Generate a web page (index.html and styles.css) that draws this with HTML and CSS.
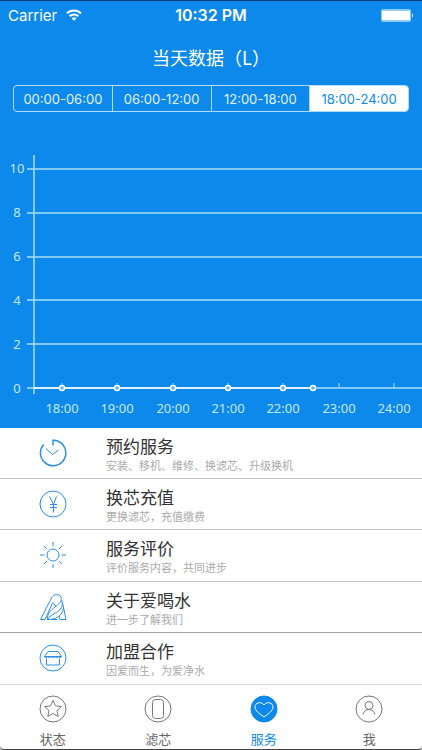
FILE: index.html
```html
<!DOCTYPE html>
<html lang="zh-CN">
  <head>
    <meta charset="UTF-8" />
    <meta name="viewport" content="width=device-width, initial-scale=1.0" />
    <title>服务</title>
    <link rel="stylesheet" href="styles.css">
  </head>
  <body>
    <header class="panel">
      <div class="status-bar">
        <div class="carrier">
          <span>Carrier</span>
          <svg width="16" height="12" viewBox="0 0 16 12" fill="none" stroke="#fff" stroke-width="2">
            <path d="M1 4.4a10 10 0 0 1 14 0M3.6 7.2a6.3 6.3 0 0 1 8.8 0" />
            <path d="M8 11.8L5.6 9.4a3.4 3.4 0 0 1 4.8 0z" fill="#fff" stroke="none" />
          </svg>
        </div>
        <span class="clock">10:32 PM</span>
        <div class="battery">
          <svg width="33" height="13" viewBox="0 0 33 13">
            <rect width="30" height="13" rx="2" fill="#8dcbf8" />
            <rect x="1" y="2" width="28" height="9" fill="#fff" />
            <path d="M31 4q2 2.5 0 5z" fill="#fff" />
          </svg>
        </div>
      </div>

      <h1>当天数据（L）</h1>

      <div class="segments">
        <button type="button" class="segment">00:00-06:00</button>
        <button type="button" class="segment">06:00-12:00</button>
        <button type="button" class="segment">12:00-18:00</button>
        <button type="button" class="segment active">18:00-24:00</button>
      </div>

      <svg class="chart" viewBox="0 0 422 290" role="img" aria-label="当天数据">
        <path class="grid" d="M27 31H422M27 75H422M27 119H422M27 162H422M27 206H422M27 250H422" />
        <path class="axis" d="M34 17V256" />
        <path class="ticks" d="M62 245V250M117 245V250M173 245V250M228 245V250M283 245V250M339 245V250M394 245V250" />
        <g class="y-labels">
          <text x="17" y="35">10</text>
          <text x="17" y="79">8</text>
          <text x="17" y="123">6</text>
          <text x="17" y="167">4</text>
          <text x="17" y="211">2</text>
          <text x="17" y="255">0</text>
        </g>
        <g class="x-labels">
          <text x="62" y="275">18:00</text>
          <text x="117" y="275">19:00</text>
          <text x="173" y="275">20:00</text>
          <text x="228" y="275">21:00</text>
          <text x="283" y="275">22:00</text>
          <text x="339" y="275">23:00</text>
          <text x="394" y="275">24:00</text>
        </g>
        <g class="series">
          <path d="M34 250H313" />
          <circle cx="62" cy="250" r="2.5" />
          <circle cx="117" cy="250" r="2.5" />
          <circle cx="173" cy="250" r="2.5" />
          <circle cx="228" cy="250" r="2.5" />
          <circle cx="283" cy="250" r="2.5" />
          <circle cx="313" cy="250" r="2.5" />
        </g>
      </svg>
    </header>

    <main class="services">
      <a class="service" href="#booking">
        <svg class="icon" viewBox="0 0 28 28">
          <path class="bold" d="M4.7 5.5A12.7 12.7 0 1 0 14 1.3V6.5" />
          <path d="M7 9.5L13.5 15.5 19.5 11" />
        </svg>
        <div>
          <h2>预约服务</h2>
          <p>安装、移机、维修、换滤芯、升级换机</p>
        </div>
      </a>
      <a class="service" href="#recharge">
        <svg class="icon" viewBox="0 0 28 28">
          <circle cx="14" cy="14" r="13" />
          <path d="M10.5 6.5l4 8 3-8M14.5 14.5v8M11 14.5h7M11 17.5h7" />
        </svg>
        <div>
          <h2>换芯充值</h2>
          <p>更换滤芯，充值缴费</p>
        </div>
      </a>
      <a class="service" href="#review">
        <svg class="icon" viewBox="0 0 28 28">
          <circle cx="14" cy="14" r="6" />
          <path d="M14 1v4M14 23v4M1 14h4.5M22.5 14H27M5 5l3 3M20 20l3 3M23 5l-3 3M8 20l-3 3" />
        </svg>
        <div>
          <h2>服务评价</h2>
          <p>评价服务内容，共同进步</p>
        </div>
      </a>
      <a class="service" href="#about">
        <svg class="icon" viewBox="0 0 28 28">
          <path d="M6 26.5H1.5L12.5 5C15 .5 20 .5 22 4c1.5 3.5-1.5 6.500-4.500 8.800C13 16.500 8 19.500 8.500 26.500" />
          <path d="M6 26.5L13.5 10l3.500 3" />
          <path d="M22.5 7c2.500 6-1 10-5 12.500-3.500 2-7.500 3.500-9 7 7 .5 16-3.500 16-12.500" />
          <path d="M23.5 9.5L27 26.5h-6l-1-3.500M12 26.5h6" />
        </svg>
        <div>
          <h2>关于爱喝水</h2>
          <p>进一步了解我们</p>
        </div>
      </a>
      <a class="service" href="#join">
        <svg class="icon" viewBox="0 0 28 28">
          <circle cx="14" cy="14" r="13" />
          <path d="M9 7.5h10l3.5 5H5.5zM7.5 14.5V21h13v-6.500" />
          <path d="M5.5 12.5q1.4 3 2.8 0q1.4 3 2.8 0q1.4 3 2.9 0q1.4 3 2.9 0q1.4 3 2.8 0q1.4 3 2.8 0" />
        </svg>
        <div>
          <h2>加盟合作</h2>
          <p>因爱而生，为爱净水</p>
        </div>
      </a>
    </main>

    <nav class="tab-bar">
      <a class="tab" href="#status">
        <svg class="icon" viewBox="0 0 28 28">
          <circle cx="14" cy="14" r="13" />
          <path d="M14 5.5l2.500 5.400 5.800.7-4.300 4 1.200 5.900-5.200-3-5.200 3 1.200-5.900-4.300-4 5.800-.7z" />
        </svg>
        <span>状态</span>
      </a>
      <a class="tab" href="#filter">
        <svg class="icon" viewBox="0 0 28 28">
          <circle cx="14" cy="14" r="13" />
          <rect x="8.5" y="4.5" width="11" height="19" rx="3" />
        </svg>
        <span>滤芯</span>
      </a>
      <a class="tab active" href="#service">
        <svg class="icon" viewBox="0 0 28 28">
          <circle cx="14" cy="14" r="13" />
          <path class="heart" d="M14 22C10.500 19.500 5 16 5 12c0-4.500 6-6 9-2 3-4 9-2.500 9 2 0 4-5.500 7.500-9 10z" />
        </svg>
        <span>服务</span>
      </a>
      <a class="tab" href="#me">
        <svg class="icon" viewBox="0 0 28 28">
          <circle cx="14" cy="14" r="13" />
          <circle cx="14" cy="10.5" r="4" />
          <path d="M8 19.5c.8-3 3-5 6-5s5.200 2 6 5" />
        </svg>
        <span>我</span>
      </a>
    </nav>
  </body>
</html>
```
FILE: styles.css
```css
* {
  box-sizing: border-box;
}
body {
  margin: 0;
  min-height: 100vh;
  display: flex;
  flex-direction: column;
  font-family: "Noto Sans CJK SC", sans-serif;
  background-color: #bbb;
}
h1,
h2,
p {
  margin: 0;
  font-weight: normal;
}
a {
  color: inherit;
  text-decoration: none;
}
.panel {
  background-color: #0c89ea;
  border-top: 1px solid #0a3c7c;
  color: #fff;
}
.status-bar {
  display: grid;
  grid-template-columns: 1fr auto 1fr;
  align-items: center;
  height: 28px;
  padding: 0 8px;
  font-family: Inter, sans-serif;
  font-size: 15px;
}
.carrier {
  display: flex;
  align-items: center;
  gap: 9px;
}
.clock {
  font-size: 16px;
  font-weight: 600;
}
.battery {
  display: flex;
  justify-content: flex-end;
}
h1 {
  padding: 16px 0;
  font-size: 18px;
  line-height: 24px;
  text-align: center;
}
.segments {
  display: flex;
  height: 27px;
  margin: 0 13px 26px;
  border: 1px solid #b0dcfa;
  border-radius: 4px;
  overflow: hidden;
}
.segment {
  flex: 1;
  padding: 0;
  border: none;
  border-left: 1px solid #b0dcfa;
  background: none;
  color: #e2f3fe;
  font-family: Inter, sans-serif;
  font-size: 13px;
  cursor: pointer;
}
.segment:first-child {
  border-left: none;
}
.segment.active {
  background-color: #fff;
  color: #0c89ea;
}
.chart {
  display: block;
  width: 100%;
  fill: none;
}
.grid,
.axis {
  stroke: #a8def8;
  stroke-width: 1.5;
}
.ticks {
  stroke: #a8def8;
}
.series {
  stroke: #fff;
  stroke-width: 1.5;
}
.series circle {
  fill: #5fb2f2;
}
.y-labels,
.x-labels {
  fill: #c4e8fb;
  font-family: "Noto Sans", sans-serif;
  font-size: 13px;
  text-anchor: middle;
}
.services {
  flex: 1;
  display: grid;
  grid-auto-rows: 1fr;
  background-color: #fff;
}
.service {
  display: flex;
  align-items: center;
  gap: 39px;
  padding: 0 39px;
  border-bottom: 1px solid #c8c8c8;
}
.service:nth-child(4) {
  border-color: #a4a4a4;
}
.service:last-child {
  border: none;
}
.icon {
  flex: none;
  width: 28px;
  height: 28px;
  fill: none;
  stroke: #2b8fe6;
}
.icon .bold {
  stroke-width: 1.5;
}
.service h2 {
  color: #333;
  font-size: 17px;
  line-height: 24px;
}
.service p {
  color: #aaa;
  font-size: 11px;
  line-height: 14px;
}
.tab-bar {
  display: flex;
  padding-top: 10px;
  background-color: #fff;
  border-top: 1px solid #ddd;
  border-bottom: 1px solid #444;
  border-radius: 0 0 4px 4px;
}
.tab {
  flex: 1;
  display: flex;
  flex-direction: column;
  align-items: center;
  gap: 6px;
  color: #666;
  font-size: 13px;
  line-height: 20px;
}
.tab .icon {
  stroke: #777;
}
.tab.active {
  color: #0c89ea;
}
.tab.active .icon {
  fill: #0c89ea;
  stroke: #0c89ea;
}
.tab.active .heart {
  stroke: #fff;
}
```
